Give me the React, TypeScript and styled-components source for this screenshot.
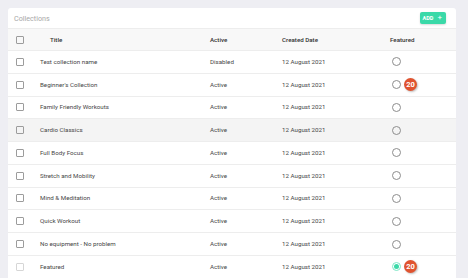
import React from 'react';
import styled, { createGlobalStyle } from 'styled-components';

const GlobalStyle = createGlobalStyle`
  html, body {
    margin: 0;
    padding: 0;
    background: #eeeef3;
    font-family: Roboto, "Liberation Sans", sans-serif;
    overflow: hidden;
  }
`;

const Page = styled.div`
  padding: 8px 12px 0 8px;
  height: 278px;
  box-sizing: border-box;
  overflow: hidden;
`;

const Card = styled.div`
  background: #fff;
  border-radius: 3px 3px 0 0;
`;

const CardHeader = styled.div`
  height: 20px;
  display: flex;
  align-items: center;
  justify-content: space-between;
  padding: 0 10px 0 6px;
`;

const CardTitle = styled.div`
  font-size: 7.2px;
  color: #a8a8a8;
`;

const AddButton = styled.button`
  border: none;
  background: #3ad9a8;
  color: #fff;
  font-family: Roboto, "Liberation Sans", sans-serif;
  font-weight: 700;
  font-size: 5.5px;
  height: 12px;
  padding: 0 4px 0 3px;
  border-radius: 2px;
  display: flex;
  align-items: center;
  gap: 4px;
  margin-top: -1px;
  box-shadow: 0 1px 2px rgba(0, 0, 0, 0.15);

  span {
    font-size: 8px;
    font-weight: 400;
  }
`;

const Row = styled.div<{ $head?: boolean; $hover?: boolean }>`
  display: grid;
  grid-template-columns: 32px 170px 72px 108px 1fr;
  align-items: center;
  height: ${p => (p.$head ? '22px' : '22.78px')};
  box-sizing: border-box;
  border-top: 1px solid #ededed;
  background: ${p => (p.$head ? '#f8f8f8' : p.$hover ? '#f4f4f4' : '#fff')};
  font-size: 6.2px;
  color: ${p => (p.$head ? '#333' : '#474747')};
  font-weight: ${p => (p.$head ? 500 : 400)};
`;

const Cell = styled.div<{ $indent?: number }>`
  padding-left: ${p => p.$indent || 0}px;
  white-space: nowrap;
`;

const Check = styled.div<{ $light?: boolean }>`
  width: 6px;
  height: 6px;
  margin-left: 8px;
  border: 1px solid ${p => (p.$light ? '#d6d6d6' : '#9c9c9c')};
  border-radius: 1px;
`;

const FeaturedCell = styled.div`
  display: flex;
  align-items: center;
  padding-left: 2px;
`;

const Radio = styled.div<{ $on?: boolean }>`
  width: 7px;
  height: 7px;
  border-radius: 50%;
  border: 1px solid ${p => (p.$on ? '#7ee6c6' : '#8d8d8d')};
  display: flex;
  align-items: center;
  justify-content: center;

  &::after {
    content: '';
    display: ${p => (p.$on ? 'block' : 'none')};
    width: 5px;
    height: 5px;
    border-radius: 50%;
    background: #3ad9a8;
  }
`;

const Badge = styled.div`
  width: 13px;
  height: 13px;
  border-radius: 50%;
  background: #e0532f;
  color: #fff;
  font-size: 7.5px;
  font-weight: 700;
  display: flex;
  align-items: center;
  justify-content: center;
  margin-left: 3px;
  box-shadow: 1px 1px 2px rgba(0, 0, 0, 0.25);
`;

interface Item {
  title: string;
  active: string;
  badge?: boolean;
  featured?: boolean;
  hover?: boolean;
}

const items: Item[] = [
  { title: 'Test collection name', active: 'Disabled' },
  { title: "Beginner's Collection", active: 'Active', badge: true },
  { title: 'Family Friendly Workouts', active: 'Active' },
  { title: 'Cardio Classics', active: 'Active', hover: true },
  { title: 'Full Body Focus', active: 'Active' },
  { title: 'Stretch and Mobility', active: 'Active' },
  { title: 'Mind & Meditation', active: 'Active' },
  { title: 'Quick Workout', active: 'Active' },
  { title: 'No equipment - No problem', active: 'Active' },
  { title: 'Featured', active: 'Active', badge: true, featured: true },
];

export default function App() {
  return (
    <Page>
      <GlobalStyle />
      <Card>
        <CardHeader>
          <CardTitle>Collections</CardTitle>
          <AddButton>
            ADD <span>+</span>
          </AddButton>
        </CardHeader>
        <Row $head>
          <Cell>
            <Check />
          </Cell>
          <Cell $indent={10}>Title</Cell>
          <Cell>Active</Cell>
          <Cell>Created Date</Cell>
          <Cell>Featured</Cell>
        </Row>
        {items.map((item, i) => (
          <Row key={i} $hover={item.hover}>
            <Cell>
              <Check $light={item.featured} />
            </Cell>
            <Cell>{item.title}</Cell>
            <Cell>{item.active}</Cell>
            <Cell>12 August 2021</Cell>
            <FeaturedCell>
              <Radio $on={item.featured} />
              {item.badge && <Badge>20</Badge>}
            </FeaturedCell>
          </Row>
        ))}
      </Card>
    </Page>
  );
}
